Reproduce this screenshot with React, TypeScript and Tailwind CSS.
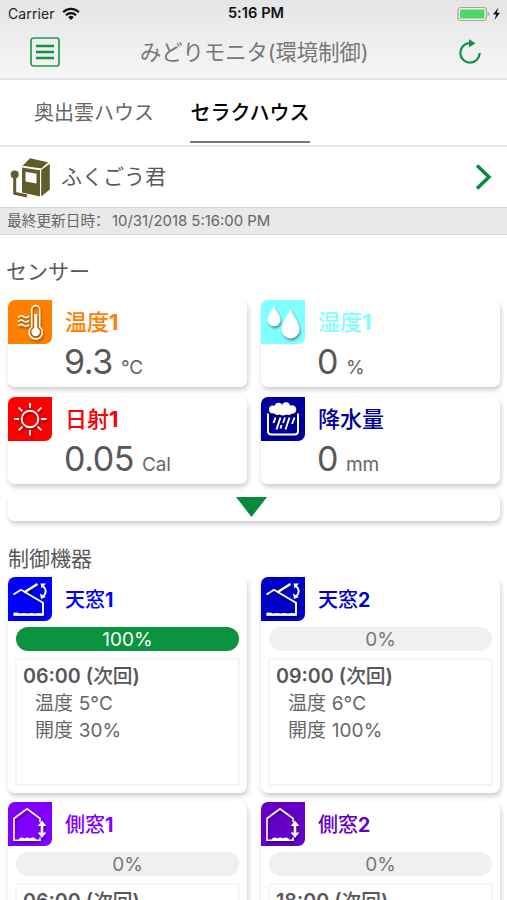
import type { ReactNode } from 'react';

const WHITE_SHADOW = 'drop-shadow-[1px_2px_1px_rgba(0,0,0,0.4)]';

function WifiIcon() {
  return (
    <svg width="18" height="14" viewBox="0 0 18 14" fill="none" stroke="#111" strokeWidth="2.3">
      <path d="M1.2 5.2a11 11 0 0 1 15.6 0" />
      <path d="M4 8.3a7 7 0 0 1 10 0" />
      <path d="M9 13 6.2 10.2a4 4 0 0 1 5.6 0z" fill="#111" stroke="none" />
    </svg>
  );
}

function StatusBar() {
  return (
    <div className="flex h-[27px] items-center justify-between pl-[8px] pr-[6px] text-[14px] text-[#222]">
      <div className="flex w-[180px] items-center gap-[7px]">
        <span className="text-[14px] tracking-[0.1px]">Carrier</span>
        <WifiIcon />
      </div>
      <span className="pt-[1px] pl-[3px] text-[14.6px] font-semibold tracking-[0.05px] text-[#111]">5:16 PM</span>
      <div className="flex w-[180px] items-center justify-end">
        <svg width="45" height="16" viewBox="0 0 45 16">
          <rect x="2" y="1.5" width="28.500" height="13" rx="3" fill="#eee" stroke="#a5a5a5" strokeWidth="1.2" />
          <rect x="4" y="3.5" width="24.500" height="9" rx="1" fill="#4cd964" />
          <path d="M31.800 6v4c2-.6 2-3.400 0-4z" fill="#a5a5a5" />
          <path d="M42.500 1.500 37 8.500h3.200L38.500 14 44 6.800h-3.200z" fill="#111" />
        </svg>
      </div>
    </div>
  );
}

function MenuIcon() {
  return (
    <svg width="30" height="30" viewBox="0 0 30 30" fill="none" stroke="#1f9c50">
      <rect x="1" y="1" width="28" height="28" rx="2.500" strokeWidth="1.700" />
      <path d="M6 9h18M6 15h18M6 21h18" strokeWidth="2.700" stroke="#0f9243" />
    </svg>
  );
}

function RefreshIcon() {
  return (
    <svg width="24" height="26" viewBox="0 0 24 26" fill="none">
      <path d="M14 4.200H11.200A9.700 9.700 0 1 0 21.700 14" stroke="#0f9243" strokeWidth="2.200" />
      <path d="M11 .3v8L17.500 4.300z" fill="#0f9243" />
    </svg>
  );
}

function ControlBoxIcon() {
  return (
    <svg width="41" height="41" viewBox="0 0 41 41">
      <path d="M12.500 8.800 20 1.300 38 5.300 31.500 11.500z" fill="#625b2a" />
      <path d="M12 10.500 30 13.300V39.500L12 35.500z" fill="#625b2a" />
      <path d="M31.200 13 39.800 6.700V32.500L31.200 39.500z" fill="#625b2a" />
      <path d="M15.500 14.800 26.500 16.800V26.500L15.500 24.500z" fill="#fff" />
      <circle cx="4.700" cy="17.500" r="4" fill="#625b2a" />
      <path d="M4.700 18V36.300L17 39" fill="none" stroke="#625b2a" strokeWidth="3" />
    </svg>
  );
}

function ThermometerIcon() {
  return (
    <svg width="44" height="44" viewBox="0 0 44 44" fill="none" className={WHITE_SHADOW}>
      <path d="M23.700 27V9.500a4 4 0 0 1 8 0V27a6.700 6.700 0 1 1-8 0z" stroke="#fff" strokeWidth="1.500" />
      <circle cx="27.700" cy="32" r="4.200" fill="#fff" />
      <path d="M27.700 14v18" stroke="#fff" strokeWidth="3" />
      <g stroke="#fff" strokeWidth="1.500">
        <path d="M10 17.500q2.800-3 5.500-.8t5.500-.8" />
        <path d="M10 21.800q2.800-3 5.500-.8t5.500-.8" />
        <path d="M10 26.100q2.800-3 5.500-.8t5.500-.8" />
      </g>
    </svg>
  );
}

function DropsIcon() {
  return (
    <svg width="44" height="44" viewBox="0 0 44 44" fill="#fff" className={WHITE_SHADOW}>
      <path d="M13 6c2 5 6.500 9.500 6.500 14a6.500 6.300 0 0 1-13 0C6.500 15.500 11 11 13 6z" />
      <path d="M29.500 9c2.500 7 9 13.500 9 20.500a9 9 0 0 1-18 0C20.500 22.500 27 16 29.500 9z" />
    </svg>
  );
}

function SunIcon() {
  return (
    <svg width="44" height="44" viewBox="0 0 44 44" fill="none" stroke="#fff" strokeWidth="1.900" className={WHITE_SHADOW}>
      <circle cx="22" cy="22" r="8.300" />
      <path d="M22 6v5M22 33v5.500M6 22h5M33 22h5.500M10.700 10.700l3.700 3.700M29.700 29.700l3.700 3.700M33.400 10.700l-3.700 3.700M14.400 29.700l-3.700 3.700" />
    </svg>
  );
}

function RainIcon() {
  return (
    <svg width="44" height="44" viewBox="0 0 44 44" fill="none" className={WHITE_SHADOW}>
      <path d="M7 16.500V34q0 3.500 3.500 3.500h23q3.500 0 3.500-3.500V16.500" stroke="#fff" strokeWidth="2" />
      <g fill="#fff">
        <circle cx="12" cy="12.500" r="4" />
        <circle cx="17.500" cy="9.500" r="3.800" />
        <circle cx="25" cy="9.300" r="4" />
        <circle cx="31" cy="12.500" r="4.300" />
        <circle cx="16.500" cy="14.500" r="3.500" />
        <circle cx="22" cy="14" r="4.500" />
        <circle cx="27.500" cy="14.500" r="3.500" />
      </g>
      <path d="M14.500 20.500 12.500 26M19.500 20.500 15.500 32.500M24 20.500 22 26M28.500 20.500 24.500 32.500M33.500 20.500 31 27M20.500 28 19.500 31.500" stroke="#fff" strokeWidth="1.900" />
    </svg>
  );
}

function RoofWindowIcon() {
  return (
    <svg width="44" height="44" viewBox="0 0 44 44" fill="none" stroke="#fff" className={WHITE_SHADOW}>
      <path d="M5.500 17.500 13 12.800 35 25.700V37.800H5.500" strokeWidth="1.900" />
      <path d="M16 15.500 29.500 7" strokeWidth="2.400" />
      <path d="M5.500 38.500v-2.700q3.500-.8 6.500.9 4-1.500 7.500 0 4-1.500 7.500 0 3-1.500 8 0v1.800z" fill="#fff" stroke="none" />
      <path d="M35 9q5.500 5 0 10.500" strokeWidth="2" />
      <path d="M32.500 6.500h5.500l-4.500 5zM32 16.500l1 5.500 5-2z" fill="#fff" stroke="none" />
    </svg>
  );
}

function SideWindowIcon() {
  return (
    <svg width="44" height="44" viewBox="0 0 44 44" fill="none" stroke="#fff" className={WHITE_SHADOW}>
      <path d="M32 20v-3.500L19 6.800 6 16.500V38.200H32V35.500" strokeWidth="1.600" />
      <path d="M11 37q2.500-2.500 5.500-.5 3-2 5.500 0 3-2 6 .5v1.500H11z" fill="#fff" stroke="none" />
      <path d="M34 22v11" strokeWidth="2.600" />
      <path d="M34 18.500 38.300 24h-8.600zM34 36 38.300 30.500h-8.600z" fill="#fff" stroke="none" />
    </svg>
  );
}

const CARD = 'rounded-[7px] bg-white shadow-[1px_3px_5px_rgba(0,0,0,0.2)]';
const TILE = 'size-[44px] shrink-0 rounded-tl-[7px] rounded-br-[7px]';

type SensorProps = { tile: string; color: string; icon: ReactNode; name: string; value: string; unit: string };

function SensorCard({ tile, color, icon, name, value, unit }: SensorProps) {
  return (
    <section className={`flex h-[87px] ${CARD}`}>
      <div className={`${TILE} ${tile}`}>{icon}</div>
      <div className="pl-[13px]">
        <h3 className={`h-[44px] text-[22px] font-medium leading-[45px] ${color}`}>
          {name.replace('1', '')}
          {name.endsWith('1') && <span className="text-[22px] font-bold">1</span>}
        </h3>
        <p className="-ml-px flex h-[36px] items-baseline gap-[8px] leading-[35px] text-[#58585a]">
          <span className="text-[34px] tracking-[-0.4px]">{value}</span>
          <span className="text-[19px] tracking-[-0.2px] text-[#666]">{unit}</span>
        </p>
      </div>
    </section>
  );
}

type DeviceProps = {
  tile: string;
  color: string;
  icon: ReactNode;
  name: string;
  index: string;
  percent: string;
  active?: boolean;
  time: string;
  temperature: string;
  opening: string;
};

function DeviceCard({ tile, color, icon, name, index, percent, active, time, temperature, opening }: DeviceProps) {
  return (
    <section className={`h-[216px] ${CARD}`}>
      <div className="flex h-[44px]">
        <div className={`${TILE} ${tile}`}>{icon}</div>
        <h3 className={`pl-[13px] text-[20px] font-medium leading-[46px] ${color}`}>
          {name}
          <span className="text-[19.500px] font-bold">{index}</span>
        </h3>
      </div>
      <div
        className={`mx-[8px] mt-[6px] h-[24px] rounded-full text-center text-[19px] leading-[26px] ${active ? 'bg-[#0a9440] text-white' : 'bg-[#f0f0f0] text-[#777]'}`}
      >
        {percent}
      </div>
      <div className="mx-[7px] mt-[7px] h-[128px] rounded-[3px] border-2 border-[#f5f5f5] pl-[6px] pt-[3px] text-[19px] leading-[27px] text-[#666]">
        <p className="text-[19.700px] font-semibold text-[#58585a]">
          {time} (<span className="font-medium">次回</span>)
        </p>
        <p className="pl-[12px] tracking-[0.1px]">温度 {temperature}</p>
        <p className="pl-[12px] tracking-[0.1px]">開度 {opening}</p>
      </div>
    </section>
  );
}

export default function App() {
  return (
    <main className="h-[900px] w-[507px] overflow-hidden bg-white font-['Inter','Noto_Sans_CJK_JP',sans-serif] text-[#58585a]">
      <header className="h-[80px] border-b-2 border-[#e4e4e4] bg-linear-to-b from-[#e5e5e5] to-[#f6f6f6]">
        <StatusBar />
        <div className="flex h-[50px] items-center pl-[30px] pr-[25px]">
          <MenuIcon />
          <h1 className="ml-[80px] flex-1 text-[21.300px] leading-[52px] text-[#777]">みどりモニタ(環境制御)</h1>
          <RefreshIcon />
        </div>
      </header>

      <nav className="flex h-[67px] gap-[36px] border-b-2 border-[#e6e6e6] pl-[34px] text-[20px] leading-[66px]">
        <span className="h-[63px] text-[#666]">奥出雲ハウス</span>
        <span className="h-[63px] w-[120px] border-b-2 border-[#777] text-center font-medium text-black">セラクハウス</span>
      </nav>

      <div className="flex h-[60px] items-center pl-[10px] pr-[15px]">
        <ControlBoxIcon />
        <span className="ml-[10px] flex-1 text-[21px] leading-[60px]">ふくごう君</span>
        <svg width="17" height="26" viewBox="0 0 17 26" fill="none" stroke="#078a3c" strokeWidth="3.500">
          <path d="M2 1.500 14 13 2 24.500" />
        </svg>
      </div>

      <div className="flex h-[28px] items-center border-y border-[#d8d8d8] bg-[#e9e9e9] pl-[7px] leading-[26px] text-[#666]">
        <span className="w-[105px] whitespace-nowrap text-[14.700px]">
          最終更新日時<span className="-ml-[4px]">：</span>
        </span>
        <span className="text-[14.900px]">10/31/2018 5:16:00 PM</span>
      </div>

      <h2 className="h-[65px] pl-[6px] pt-[17px] text-[21px] leading-[40px]">センサー</h2>
      <div className="grid grid-cols-2 gap-x-[14px] gap-y-[10px] pl-[8px] pr-[7px]">
        <SensorCard tile="bg-[#ff8000]" color="text-[#ff8000]" icon={<ThermometerIcon />} name="温度1" value="9.3" unit="°C" />
        <SensorCard tile="bg-[#80ffff]" color="text-[#80ffff]" icon={<DropsIcon />} name="湿度1" value="0" unit="%" />
        <SensorCard tile="bg-[#ff0000]" color="text-[#ff0000]" icon={<SunIcon />} name="日射1" value="0.05" unit="Cal" />
        <SensorCard tile="bg-[#0000a0]" color="text-[#0000a0]" icon={<RainIcon />} name="降水量" value="0" unit="mm" />
      </div>
      <div className={`ml-[8px] mr-[7px] mt-[9px] flex h-[28px] items-center justify-center ${CARD}`}>
        <svg width="31" height="20" viewBox="0 0 31 20" className="mr-[5px]">
          <path d="M0 0H31L15.500 20z" fill="#078a3c" />
        </svg>
      </div>

      <h2 className="h-[56px] pl-[8px] pt-[18px] text-[21px] leading-[40px]">制御機器</h2>
      <div className="grid grid-cols-2 gap-x-[14px] gap-y-[9px] pl-[8px] pr-[7px]">
        <DeviceCard tile="bg-[#0000ff]" color="text-[#0000ff]" icon={<RoofWindowIcon />} name="天窓" index="1" percent="100%" active time="06:00" temperature="5°C" opening="30%" />
        <DeviceCard tile="bg-[#0000c8]" color="text-[#0000c8]" icon={<RoofWindowIcon />} name="天窓" index="2" percent="0%" time="09:00" temperature="6°C" opening="100%" />
        <DeviceCard tile="bg-[#8000ff]" color="text-[#8000ff]" icon={<SideWindowIcon />} name="側窓" index="1" percent="0%" time="06:00" temperature="5°C" opening="30%" />
        <DeviceCard tile="bg-[#6400c8]" color="text-[#6400c8]" icon={<SideWindowIcon />} name="側窓" index="2" percent="0%" time="18:00" temperature="6°C" opening="100%" />
      </div>
    </main>
  );
}
